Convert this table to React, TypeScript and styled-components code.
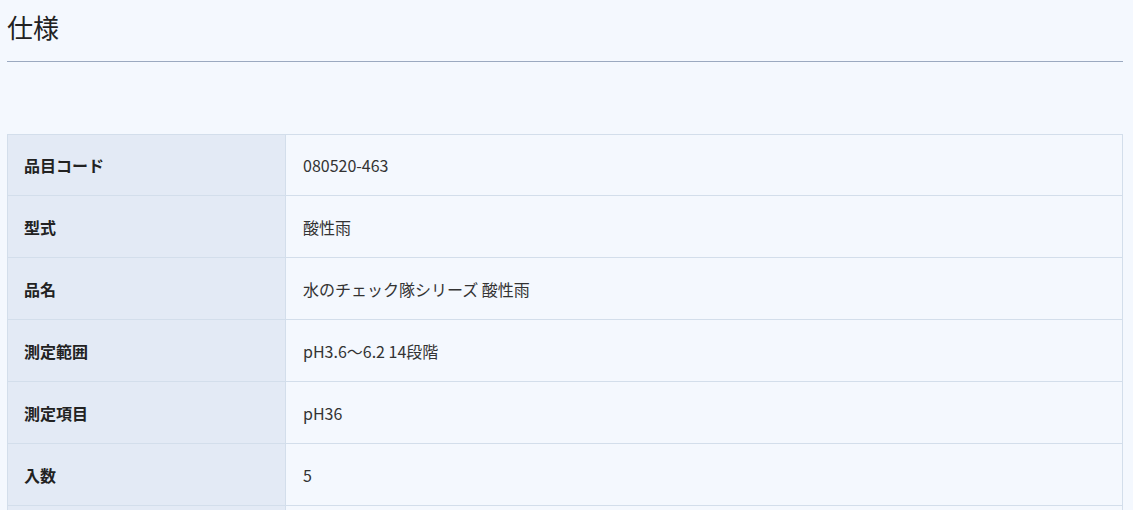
import React from "react";
import styled, { createGlobalStyle } from "styled-components";

const GlobalStyle = createGlobalStyle`
  html, body {
    margin: 0;
    padding: 0;
    background: #f4f8fe;
  }
  body {
    font-family: "Noto Sans CJK JP", "Noto Sans", sans-serif;
    color: #333;
  }
`;

const Page = styled.div`
  padding: 0 10px 0 7px;
`;

const Heading = styled.h2`
  margin: 0;
  padding-top: 8px;
  padding-bottom: 15px;
  font-size: 26px;
  font-weight: 400;
  line-height: 38px;
  color: #222;
  border-bottom: 1px solid #9ba9c0;
`;

const Spacer = styled.div`
  height: 72px;
`;

const Table = styled.table`
  width: 100%;
  border-collapse: collapse;
  border: 1px solid #d3deeb;
`;

const Row = styled.tr`
  height: 62px;
  &:first-child {
    height: 61px;
  }
`;

const Label = styled.th`
  width: 278px;
  background: #e3eaf5;
  border: 1px solid #d3deeb;
  text-align: left;
  padding: 0 16px;
  font-size: 16px;
  font-weight: 700;
  color: #222;
  box-sizing: border-box;
`;

const Value = styled.td`
  border: 1px solid #d3deeb;
  padding: 0 17px;
  font-size: 16px;
  font-weight: 400;
  color: #333;
`;

const specs: [string, string][] = [
  ["品目コード", "080520-463"],
  ["型式", "酸性雨"],
  ["品名", "水のチェック隊シリーズ 酸性雨"],
  ["測定範囲", "pH3.6〜6.2 14段階"],
  ["測定項目", "pH36"],
  ["入数", "5"],
];

export default function App() {
  return (
    <>
      <GlobalStyle />
      <Page>
        <Heading>仕様</Heading>
        <Spacer />
        <Table>
          <tbody>
            {specs.map(([k, v]) => (
              <Row key={k}>
                <Label>{k}</Label>
                <Value>{v}</Value>
              </Row>
            ))}
            <Row>
              <Label />
              <Value />
            </Row>
          </tbody>
        </Table>
      </Page>
    </>
  );
}
